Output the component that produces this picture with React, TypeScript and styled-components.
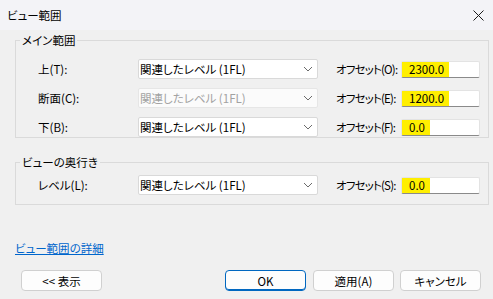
import React from "react";
import styled, { createGlobalStyle } from "styled-components";

const GlobalStyle = createGlobalStyle`
  html, body {
    margin: 0;
    padding: 0;
    background: #f0f0f0;
  }
  body {
    font-family: "Noto Sans CJK JP", "Noto Sans", sans-serif;
    font-size: 11.5px;
    font-feature-settings: "palt";
    color: #000;
  }
  * {
    box-sizing: border-box;
  }
`;

const Window = styled.div`
  width: 493px;
  height: 299px;
  display: flex;
  flex-direction: column;
  background: #f0f0f0;
  overflow: hidden;
`;

const TitleBar = styled.div`
  height: 30px;
  flex: none;
  display: flex;
  align-items: center;
  justify-content: space-between;
  padding: 0 9px 0 7px;
  background: #f3f3f7;
`;

const CloseButton = styled.div`
  width: 12px;
  height: 12px;
  display: flex;
  align-items: center;
  justify-content: center;
`;

const Body = styled.div`
  flex: 1;
  display: flex;
  flex-direction: column;
  padding: 0 4px 0 15px;
`;

const Group = styled.fieldset<{ $top: number; $padTop: number; $padBottom: number }>`
  margin: ${(p) => p.$top}px 0 0;
  padding: ${(p) => p.$padTop}px 8px ${(p) => p.$padBottom}px 4px;
  border: 1px solid #dadada;
  min-width: 0;
`;

const Legend = styled.legend`
  padding: 0 2px;
  height: 14px;
  line-height: 14px;
`;

const Rows = styled.div`
  display: flex;
  flex-direction: column;
  gap: 9px;
  padding-left: 18px;
`;

const Row = styled.div`
  display: grid;
  grid-template-columns: 100px 180px 83px 79px;
  align-items: center;
  height: 20px;
`;

const Label = styled.span<{ $indent?: number; $tight?: boolean }>`
  padding-left: ${(p) => p.$indent ?? 0}px;
  letter-spacing: ${(p) => (p.$tight ? "-0.8px" : "normal")};
  white-space: nowrap;
  overflow: hidden;
`;

const Combo = styled.div<{ $disabled?: boolean }>`
  height: 20px;
  display: flex;
  align-items: center;
  justify-content: space-between;
  padding: 0 4px 0 1px;
  background: ${(p) => (p.$disabled ? "#fbfbfb" : "#fff")};
  border: 1px solid ${(p) => (p.$disabled ? "#e6e6e6" : "#d9d9d9")};
  border-radius: 2px;
  color: ${(p) => (p.$disabled ? "#a2a2a2" : "#000")};
  white-space: nowrap;
`;

const NumberBox = styled.div`
  height: 17px;
  display: flex;
  align-items: center;
  background: #fff;
  border: 1px solid #e3e3e3;
  border-bottom-color: #8a8a8a;
  border-radius: 2px;
`;

const Highlight = styled.span`
  background: #ffef00;
  height: 15px;
  line-height: 15px;
  padding: 0 5px 0 7px;
`;

const LinkText = styled.a`
  margin-top: 35px;
  line-height: 16px;
  color: #0066cc;
  text-decoration: underline;
  align-self: flex-start;
`;

const ButtonBar = styled.div`
  margin-top: 14px;
  display: flex;
  align-items: center;
  padding: 0 8px 0 6px;
`;

const Spacer = styled.div`
  flex: 1;
`;

const Button = styled.button<{ $primary?: boolean; $gap?: number }>`
  width: 81px;
  height: 21px;
  margin-left: ${(p) => p.$gap ?? 0}px;
  padding: 0;
  font-family: inherit;
  font-size: inherit;
  font-feature-settings: "palt";
  color: #000;
  background: #fdfdfd;
  border: 1px solid ${(p) => (p.$primary ? "#0067c0" : "#d0d0d0")};
  box-shadow: ${(p) => (p.$primary ? "inset 0 -1px 0 #0067c0" : "none")};
  border-radius: 4px;
`;

const Chevron = () => (
  <svg width="10" height="6" viewBox="0 0 10 6">
    <path d="M1 1 L5 5 L9 1" fill="none" stroke="#6b6b6b" strokeWidth="1" />
  </svg>
);

const CloseIcon = () => (
  <svg width="11" height="11" viewBox="0 0 11 11">
    <path d="M0.5 0.5 L10.5 10.5 M10.5 0.5 L0.5 10.5" stroke="#1b1b1b" strokeWidth="1" />
  </svg>
);

interface RangeRow {
  label: string;
  offsetLabel: string;
  offset: string;
  disabled?: boolean;
}

const mainRows: RangeRow[] = [
  { label: "上(T):", offsetLabel: "オフセット(O):", offset: "2300.0" },
  { label: "断面(C):", offsetLabel: "オフセット(E):", offset: "1200.0", disabled: true },
  { label: "下(B):", offsetLabel: "オフセット(F):", offset: "0.0" },
];

const depthRows: RangeRow[] = [
  { label: "レベル(L):", offsetLabel: "オフセット(S):", offset: "0.0" },
];

const renderRow = (row: RangeRow) => (
  <Row key={row.label}>
    <Label>{row.label}</Label>
    <Combo $disabled={row.disabled}>
      <span>関連したレベル (1FL)</span>
      <Chevron />
    </Combo>
    <Label $indent={18} $tight>
      {row.offsetLabel}
    </Label>
    <NumberBox>
      <Highlight>{row.offset}</Highlight>
    </NumberBox>
  </Row>
);

export default function App() {
  return (
    <>
      <GlobalStyle />
      <Window>
        <TitleBar>
          <span>ビュー範囲</span>
          <CloseButton>
            <CloseIcon />
          </CloseButton>
        </TitleBar>

        <Body>
          <Group $top={3} $padTop={12} $padBottom={0}>
            <Legend>メイン範囲</Legend>
            <Rows>{mainRows.map(renderRow)}</Rows>
          </Group>

          <Group $top={17} $padTop={6} $padBottom={9}>
            <Legend>ビューの奥行き</Legend>
            <Rows>{depthRows.map(renderRow)}</Rows>
          </Group>

          <LinkText>ビュー範囲の詳細</LinkText>

          <ButtonBar>
            <Button>&lt;&lt; 表示</Button>
            <Spacer />
            <Button $primary>OK</Button>
            <Button $gap={7}>適用(A)</Button>
            <Button $gap={6}>キャンセル</Button>
          </ButtonBar>
        </Body>
      </Window>
    </>
  );
}
